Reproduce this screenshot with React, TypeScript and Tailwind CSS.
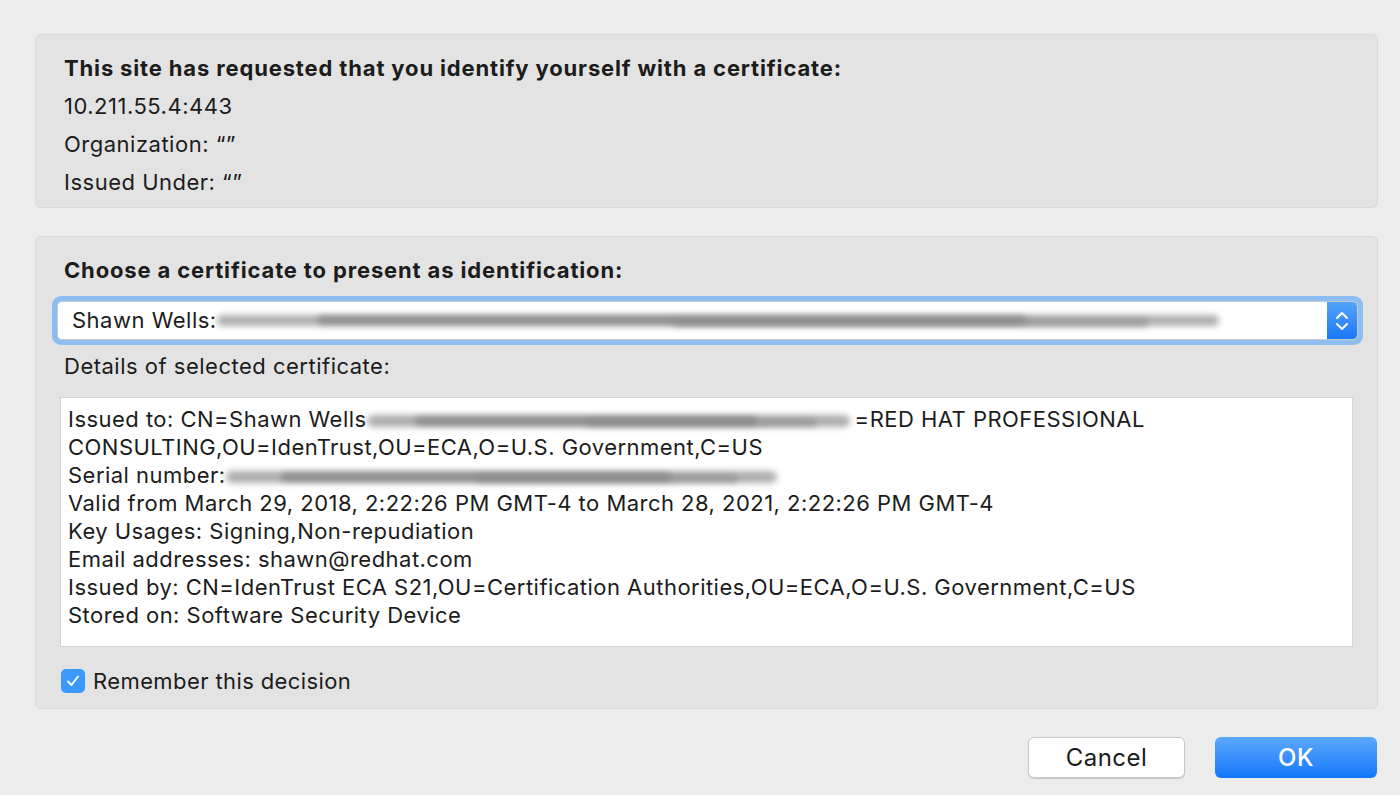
import React from "react";

const font = { fontFamily: "Inter, 'Liberation Sans', sans-serif" };

// Smudge standing in for the redacted parts of the picture
const Smudge = ({ width }: { width: number }) => (
  <span
    className="relative inline-block h-[0.9em] align-middle"
    style={{ width }}
  >
    <span className="absolute left-0 right-[1%] top-[20%] h-[60%] rounded-full bg-[#a0a0a0] blur-[3px] opacity-85" />
    <span className="absolute left-[10%] right-[20%] top-[28%] h-[42%] rounded-full bg-[#808080] blur-[3px] opacity-75" />
    <span className="absolute left-[45%] right-[8%] top-[42%] h-[35%] rounded-full bg-[#8c8c8c] blur-[3px] opacity-70" />
  </span>
);

const StepperIcon = () => (
  <svg width="14" height="22" viewBox="0 0 14 22" fill="none">
    <path d="M2 8 L7 3 L12 8" stroke="white" strokeWidth="2" strokeLinecap="round" strokeLinejoin="round" />
    <path d="M2 14 L7 19 L12 14" stroke="white" strokeWidth="2" strokeLinecap="round" strokeLinejoin="round" />
  </svg>
);

const details = [
  null,
  "CONSULTING,OU=IdenTrust,OU=ECA,O=U.S. Government,C=US",
  null,
  "Valid from March 29, 2018, 2:22:26 PM GMT-4 to March 28, 2021, 2:22:26 PM GMT-4",
  "Key Usages: Signing,Non-repudiation",
  "Email addresses: shawn@redhat.com",
  "Issued by: CN=IdenTrust ECA S21,OU=Certification Authorities,OU=ECA,O=U.S. Government,C=US",
  "Stored on: Software Security Device",
];

export default function App() {
  return (
    <div
      className="w-[1400px] h-[795px] bg-[#ececec] pl-[35px] pr-[22px] pt-[34px] text-[#1c1c1c]"
      style={font}
    >
      {/* Site info panel */}
      <div className="h-[174px] rounded-md border border-[#d9d9d9] bg-[#e3e3e3] pl-[28px] pt-[14px] text-[22px] leading-[38px] tracking-[0.5px]">
        <div className="font-bold tracking-[0.85px]">
          This site has requested that you identify yourself with a certificate:
        </div>
        <div>10.211.55.4:443</div>
        <div>Organization: “”</div>
        <div>Issued Under: “”</div>
      </div>

      {/* Certificate chooser panel */}
      <div className="mt-[28px] h-[473px] rounded-md border border-[#d9d9d9] bg-[#e3e3e3] pl-[16px] pr-[14px] pt-[14px] text-[22px] tracking-[0.5px]">
        <div className="ml-[12px] font-bold leading-[38px] tracking-[0.85px]">
          Choose a certificate to present as identification:
        </div>

        <div className="mt-[7px] rounded-[9px] bg-[#8ebdf2] p-[5px]">
          <div className="flex h-[39px] items-stretch overflow-hidden rounded-[5px] border border-[#c9c9c9] bg-white">
            <div className="flex flex-1 items-center whitespace-nowrap pl-[14px]">
              Shawn Wells:
              <Smudge width={1012} />
            </div>
            <div className="flex w-[30px] items-center justify-center rounded-r-[4px] bg-gradient-to-b from-[#54a3fb] to-[#1677f6]">
              <StepperIcon />
            </div>
          </div>
        </div>

        <div className="ml-[12px] mt-[2px] leading-[38px]">Details of selected certificate:</div>

        <div className="ml-[8px] mr-[10px] mt-[12px] h-[250px] border border-[#d4d4d4] bg-white pl-[7px] pt-[7px] leading-[28px] tracking-[0.47px]">
          {details.map((line, i) => {
            if (i === 0)
              return (
                <div key={i} className="whitespace-nowrap">
                  Issued to: CN=Shawn Wells
                  <Smudge width={488} />
                  =RED HAT PROFESSIONAL
                </div>
              );
            if (i === 2)
              return (
                <div key={i} className="whitespace-nowrap">
                  Serial number:
                  <Smudge width={557} />
                </div>
              );
            return (
              <div key={i} className="whitespace-nowrap">
                {line}
              </div>
            );
          })}
        </div>

        <label className="ml-[9px] mt-[22px] flex items-center gap-[8px] leading-[24px] tracking-[0.4px]">
          <span className="flex h-[24px] w-[24px] items-center justify-center rounded-[5px] bg-[#3b99fc]">
            <svg width="14" height="14" viewBox="0 0 14 14" fill="none">
              <path d="M2 7.5 L5.5 11 L12 2.5" stroke="white" strokeWidth="2" strokeLinecap="round" strokeLinejoin="round" />
            </svg>
          </span>
          Remember this decision
        </label>
      </div>

      {/* Buttons */}
      <div className="mt-[28px] flex justify-end gap-[30px] pr-[1px] text-[24px] tracking-[0.5px]">
        <button className="h-[41px] w-[157px] rounded-[6px] border border-[#c8c8c8] bg-white shadow-[0_1px_1px_rgba(0,0,0,0.15)]">
          Cancel
        </button>
        <button className="h-[41px] w-[162px] rounded-[6px] bg-gradient-to-b from-[#5aa8fb] to-[#0f76fa] font-medium text-white">
          OK
        </button>
      </div>
    </div>
  );
}
